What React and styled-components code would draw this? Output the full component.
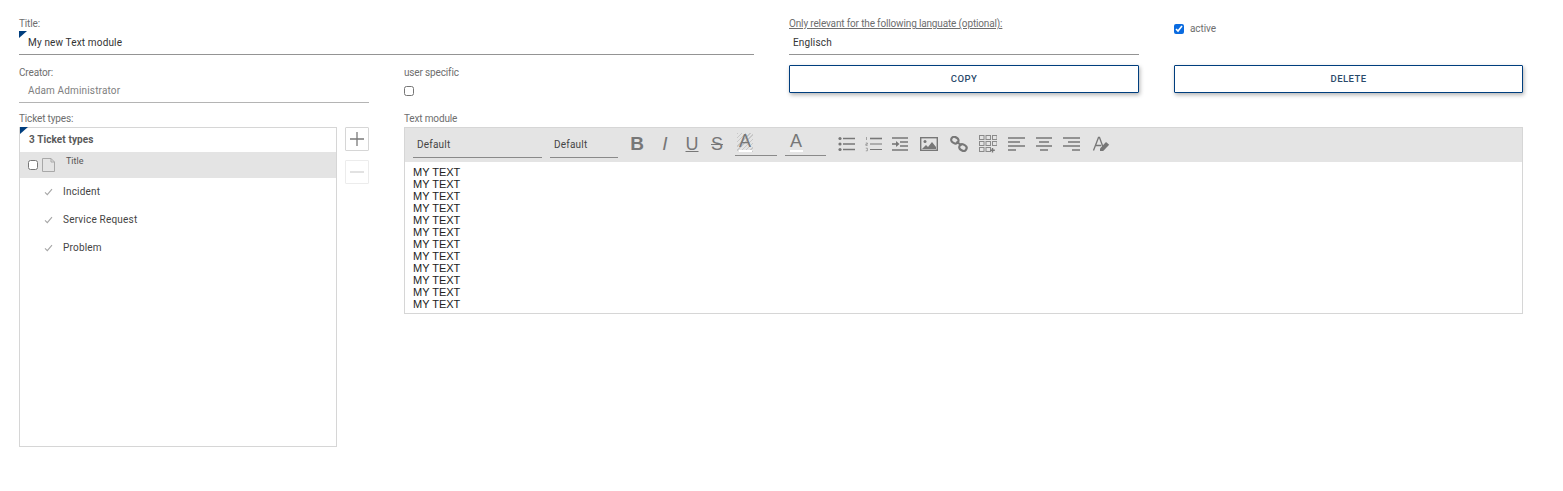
import React from 'react'
import styled, { createGlobalStyle } from 'styled-components'

const GlobalStyle = createGlobalStyle`
  html, body {
    margin: 0;
    padding: 0;
    background: #fff;
    font-family: Roboto, "Liberation Sans", sans-serif;
  }
`

const Page = styled.div`
  display: grid;
  grid-template-columns: 350px 350px 350px 349px;
  grid-template-rows: 37px 34px auto;
  column-gap: 35px;
  row-gap: 12px;
  padding: 18px 0 44px 19px;
  width: 1504px;
  height: 429px;
`

const Field = styled.div`
  grid-column: ${(p) => p.$span || 'auto'};
  display: flex;
  flex-direction: column;
  position: relative;
  min-width: 0;
`

const Label = styled.label`
  font-size: 10px;
  line-height: 12px;
  letter-spacing: -0.15px;
  color: #6e6e6e;
  text-decoration: ${(p) => (p.$underline ? 'underline' : 'none')};
`

const InputLine = styled.div`
  flex: none;
  height: ${(p) => (p.$muted ? 24 : 25)}px;
  box-sizing: border-box;
  border-bottom: 1px solid ${(p) => (p.$muted ? '#b4b4b4' : '#949494')};
  padding: ${(p) => (p.$muted ? 6 : 7)}px 0 0 ${(p) => p.$indent || 9}px;
  font-size: 10px;
  line-height: 12px;
  letter-spacing: 0.15px;
  color: ${(p) => (p.$muted ? '#808080' : '#333')};
  position: relative;
`

const Corner = styled.span`
  position: absolute;
  left: 0;
  top: ${(p) => p.$top}px;
  width: 0;
  height: 0;
  border-top: 7px solid #003e7e;
  border-right: 8px solid transparent;
`

const ActiveRow = styled.div`
  display: flex;
  align-items: center;
  gap: 6px;
  padding-top: 5px;
  font-size: 10px;
  line-height: 12px;
  letter-spacing: -0.1px;
  color: #6e6e6e;
`

const Check = styled.input.attrs({ type: 'checkbox' })`
  width: 10px;
  height: 10px;
  margin: 0;
  accent-color: #0a6be0;
`

const UserCheck = styled(Check)`
  margin-top: 7px;
`

const ActionButton = styled.button`
  height: 28px;
  margin-top: -2px;
  padding: 0 0 2px;
  background: #fff;
  border: 1px solid #003e7e;
  border-radius: 1px;
  box-shadow: 1px 2px 4px rgba(0, 0, 0, 0.3);
  font-family: Roboto, "Liberation Sans", sans-serif;
  font-size: 9.5px;
  font-weight: 500;
  letter-spacing: 0.45px;
  color: #2a4a6a;
`

const TicketArea = styled.div`
  display: flex;
  gap: 8px;
  margin-top: 2px;
`

const ListBox = styled.div`
  width: 318px;
  height: 320px;
  box-sizing: border-box;
  border: 1px solid #d6d6d6;
  position: relative;
`

const ListTitle = styled.div`
  height: 24px;
  padding: 6px 0 0 9px;
  box-sizing: border-box;
  font-size: 10px;
  line-height: 12px;
  font-weight: 700;
  letter-spacing: 0.1px;
  color: #5a5a5a;
`

const ListHead = styled.div`
  height: 26px;
  background: #e4e4e4;
  display: flex;
  align-items: flex-start;
  padding: 6px 0 0 8px;
  box-sizing: border-box;
  font-size: 9px;
  line-height: 11px;
  color: #555;
`

const HeadCheck = styled(Check)`
  margin-top: 2px;
  margin-right: 4px;
`

const HeadTitle = styled.span`
  margin-left: 11px;
  margin-top: -2px;
`

const ListRow = styled.div`
  height: 28px;
  box-sizing: border-box;
  padding: 0 0 1px 24px;
  display: flex;
  align-items: center;
  font-size: 10px;
  letter-spacing: 0.2px;
  color: #444;
  gap: 10px;
`

const SideButtons = styled.div`
  display: flex;
  flex-direction: column;
  gap: 9px;
`

const SideButton = styled.button`
  width: 24px;
  height: 24px;
  padding: 0;
  background: #fff;
  border: 1px solid ${(p) => (p.$disabled ? '#ececec' : '#d6d6d6')};
  border-radius: 1px;
  display: flex;
  align-items: center;
  justify-content: center;
`

const Editor = styled.div`
  margin-top: 2px;
  height: 187px;
  box-sizing: border-box;
  border: 1px solid #d6d6d6;
`

const Toolbar = styled.div`
  height: 34px;
  background: #e4e4e4;
  display: flex;
  align-items: flex-start;
  padding-left: 8px;
`

const FontSelect = styled.div`
  width: ${(p) => p.$w}px;
  height: 30px;
  margin-right: ${(p) => p.$mr}px;
  box-sizing: border-box;
  border-bottom: 1px solid #8a8a8a;
  padding: 11px 0 0 4px;
  font-size: 10px;
  line-height: 12px;
  letter-spacing: 0.2px;
  color: #444;
`

const ToolIcon = styled.span`
  display: flex;
  flex: none;
  width: ${(p) => p.$w || 18}px;
  height: 20px;
  margin-top: 6px;
  margin-right: ${(p) => p.$mr ?? 8}px;
  align-items: center;
  justify-content: center;
`

const Glyph = styled.span`
  font-family: "Liberation Sans", sans-serif;
  font-size: ${(p) => p.$size || 18}px;
  font-weight: ${(p) => p.$weight || 400};
  font-style: ${(p) => (p.$italic ? 'italic' : 'normal')};
  text-decoration: ${(p) => p.$decoration || 'none'};
  color: #777;
  line-height: 20px;
`

const ColorPick = styled.div`
  width: ${(p) => p.$w}px;
  height: 28px;
  box-sizing: border-box;
  margin-right: ${(p) => p.$mr}px;
  border-bottom: 1px solid #8a8a8a;
  padding: 5px 0 0 ${(p) => p.$pad}px;
`

const ColorSwatch = styled.div`
  width: 16px;
  height: 19px;
  display: flex;
  flex-direction: column;
  align-items: center;
  font-family: "Liberation Sans", sans-serif;
  font-size: 18px;
  line-height: 17px;
  color: #777;
  background: ${(p) =>
    p.$hatched
      ? 'repeating-linear-gradient(135deg, #c8c8c8 0 1px, #e4e4e4 1px 3px)'
      : 'transparent'};
  &::after {
    content: '';
    flex: none;
    width: 13px;
    height: 2px;
    background: #fff;
  }
`

const EditorBody = styled.div`
  padding: 4px 0 0 8px;
  font-family: "Liberation Sans", Arial, sans-serif;
  font-size: 11px;
  line-height: 12px;
  color: #222;
`

const stroke = { stroke: '#777', fill: 'none' }

const BulletIcon = () => (
  <svg width="18" height="16" viewBox="0 0 18 16">
    <g {...stroke} strokeWidth="1.6">
      <path d="M5 2.5h12M5 8h12M5 13.5h12" />
    </g>
    <g fill="#777">
      <circle cx="2" cy="2.5" r="1.6" />
      <circle cx="2" cy="8" r="1.6" />
      <circle cx="2" cy="13.5" r="1.6" />
    </g>
  </svg>
)

const NumberIcon = () => (
  <svg width="18" height="16" viewBox="0 0 18 16">
    <path d="M5 2.5h12" {...stroke} strokeWidth="1.6" />
    <path d="M5 8h12M5 13.5h12" {...stroke} strokeWidth="1.2" />
    <path d="M1.5 1v3M.8 7h1.6v1.2H.8v1.2h1.8M.8 12.2h1.6v2.6H.8" {...stroke} strokeWidth=".6" />
  </svg>
)

const IndentIcon = () => (
  <svg width="18" height="16" viewBox="0 0 18 16">
    <path d="M1 2h16M9 6h8M9 10h8M1 14h16" {...stroke} strokeWidth="1.5" />
    <path d="M1 8h5" {...stroke} strokeWidth="1.6" />
    <path d="M5 5l3.5 3L5 11z" fill="#777" />
  </svg>
)

const ImageIcon = () => (
  <svg width="18" height="14" viewBox="0 0 18 14">
    <rect x=".7" y=".7" width="16.6" height="12.6" {...stroke} strokeWidth="1.4" />
    <circle cx="5" cy="4.5" r="1.5" fill="#777" />
    <path d="M2 12l4-4 2 2 4-5 4 5v2z" fill="#777" />
  </svg>
)

const LinkIcon = () => (
  <svg width="18" height="16" viewBox="0 0 18 16">
    <g {...stroke} strokeWidth="2.2">
      <rect x="1.2" y="1.2" width="7.5" height="6" rx="3" transform="rotate(30 5 4)" />
      <rect x="9.2" y="8.6" width="7.5" height="6" rx="3" transform="rotate(30 13 11.5)" />
      <path d="M6.5 5.5l5 4" />
    </g>
  </svg>
)

const TableIcon = () => {
  const cells = []
  for (let row = 0; row < 3; row++) {
    for (let col = 0; col < 3; col++) {
      if (row === 2 && col === 2) continue
      cells.push(<rect key={`${row}-${col}`} x={0.5 + col * 6.5} y={0.5 + row * 6} width="4.5" height="4" fill="none" stroke="#8a8a8a" strokeWidth="1" />)
    }
  }
  return (
    <svg width="18" height="18" viewBox="0 0 18 18">
      {cells}
      <path d="M13.5 13v4.5M11.3 15.2h4.5" {...stroke} strokeWidth="1.4" />
    </svg>
  )
}

const AlignIcon = ({ lines }) => (
  <svg width="18" height="16" viewBox="0 0 18 16">
    <path d={lines} {...stroke} strokeWidth="1.4" />
  </svg>
)

const ClearFormatIcon = () => (
  <svg width="18" height="16" viewBox="0 0 18 16">
    <path d="M1.5 14.5L6.5 1.5h1L11 11M3.7 9.5h5.5" {...stroke} strokeWidth="1.3" />
    <path d="M8 12.5l6-6.5 3.2 2.8-6 6.2H8z" fill="#777" />
  </svg>
)

const TickIcon = () => (
  <svg width="9" height="8" viewBox="0 0 9 8">
    <path d="M1 4.4l2.3 2.3L8 1.2" fill="none" stroke="#a6a6a6" strokeWidth="1.1" />
  </svg>
)

const FileIcon = () => (
  <svg width="13" height="14" viewBox="0 0 13 14">
    <path d="M.5.5h8.5l3.5 3.5v9.5H.5z M9 .5V4h3.5" fill="none" stroke="#a8a8a8" />
  </svg>
)

const PlusIcon = () => (
  <svg width="14" height="14" viewBox="0 0 14 14">
    <path d="M7 0v14M0 7h14" fill="none" stroke="#7a7a7a" strokeWidth="1.3" />
  </svg>
)

const MinusIcon = () => (
  <svg width="14" height="14" viewBox="0 0 14 14">
    <path d="M0 7h14" fill="none" stroke="#d2d2d2" strokeWidth="1.3" />
  </svg>
)

const ticketTypes = ['Incident', 'Service Request', 'Problem']
const textLines = Array.from({ length: 12 }, (_, i) => i)

export default function App() {
  return (
    <Page>
      <GlobalStyle />

      <Field $span="span 2">
        <Label>Title:</Label>
        <InputLine>
          <Corner $top={1} />
          My new Text module
        </InputLine>
      </Field>
      <Field>
        <Label $underline>Only relevant for the following languate (optional):</Label>
        <InputLine $indent={4}>Englisch</InputLine>
      </Field>
      <Field>
        <ActiveRow>
          <Check defaultChecked />
          active
        </ActiveRow>
      </Field>

      <Field>
        <Label>Creator:</Label>
        <InputLine $muted>Adam Administrator</InputLine>
      </Field>
      <Field>
        <Label>user specific</Label>
        <UserCheck />
      </Field>
      <Field>
        <ActionButton>COPY</ActionButton>
      </Field>
      <Field>
        <ActionButton>DELETE</ActionButton>
      </Field>

      <Field>
        <Label>Ticket types:</Label>
        <TicketArea>
          <ListBox>
            <Corner $top={-1} />
            <ListTitle>3 Ticket types</ListTitle>
            <ListHead>
              <HeadCheck />
              <FileIcon />
              <HeadTitle>Title</HeadTitle>
            </ListHead>
            {ticketTypes.map((name) => (
              <ListRow key={name}>
                <TickIcon />
                {name}
              </ListRow>
            ))}
          </ListBox>
          <SideButtons>
            <SideButton>
              <PlusIcon />
            </SideButton>
            <SideButton $disabled>
              <MinusIcon />
            </SideButton>
          </SideButtons>
        </TicketArea>
      </Field>

      <Field $span="span 3">
        <Label>Text module</Label>
        <Editor>
          <Toolbar>
            <FontSelect $w={129} $mr={8}>Default</FontSelect>
            <FontSelect $w={68} $mr={11}>Default</FontSelect>
            <ToolIcon $w={16} $mr={12}><Glyph $weight={700} $size={19}>B</Glyph></ToolIcon>
            <ToolIcon $w={16} $mr={11}><Glyph $italic $size={19}>I</Glyph></ToolIcon>
            <ToolIcon $w={16} $mr={11}><Glyph $decoration="underline" $size={18}>U</Glyph></ToolIcon>
            <ToolIcon $w={12} $mr={12}><Glyph $decoration="line-through" $size={18}>S</Glyph></ToolIcon>
            <ColorPick $w={42} $mr={8} $pad={2}>
              <ColorSwatch $hatched>A</ColorSwatch>
            </ColorPick>
            <ColorPick $w={41} $mr={12} $pad={3}>
              <ColorSwatch>A</ColorSwatch>
            </ColorPick>
            <ToolIcon $mr={9}><BulletIcon /></ToolIcon>
            <ToolIcon><NumberIcon /></ToolIcon>
            <ToolIcon $mr={11}><IndentIcon /></ToolIcon>
            <ToolIcon $mr={12}><ImageIcon /></ToolIcon>
            <ToolIcon $mr={11}><LinkIcon /></ToolIcon>
            <ToolIcon $mr={11}><TableIcon /></ToolIcon>
            <ToolIcon $mr={9}><AlignIcon lines="M0 2h17M0 6h12M0 10h17M0 14h8" /></ToolIcon>
            <ToolIcon $mr={9}><AlignIcon lines="M1 2h16M4 6h10M1 10h16M5 14h8" /></ToolIcon>
            <ToolIcon $mr={12}><AlignIcon lines="M1 2h17M6 6h12M1 10h17M10 14h8" /></ToolIcon>
            <ToolIcon><ClearFormatIcon /></ToolIcon>
          </Toolbar>
          <EditorBody>
            {textLines.map((i) => (
              <div key={i}>MY TEXT</div>
            ))}
          </EditorBody>
        </Editor>
      </Field>
    </Page>
  )
}
